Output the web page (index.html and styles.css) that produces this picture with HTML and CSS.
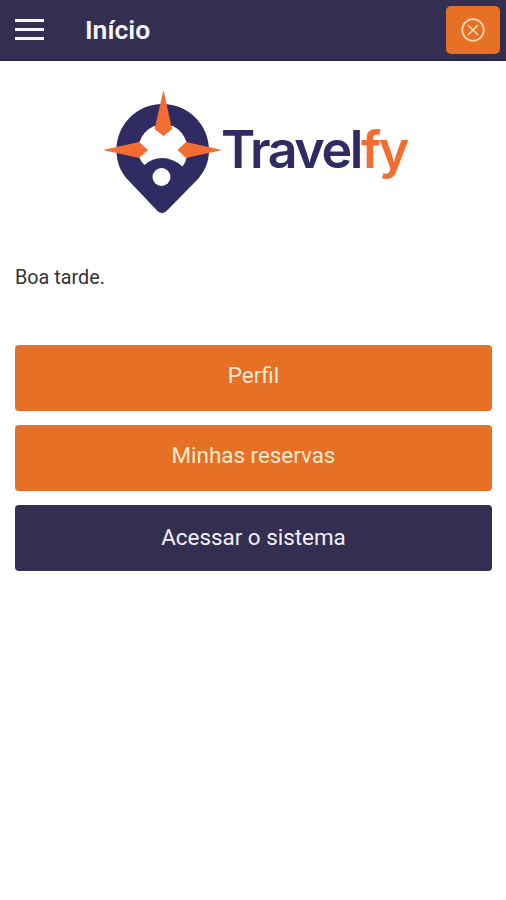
FILE: index.html
```html
<!DOCTYPE html>
<html lang="pt-BR">
<head>
    <meta charset="UTF-8">
    <meta name="viewport" content="width=device-width, initial-scale=1.0">
    <title>Travelfy</title>
    <link rel="stylesheet" href="styles.css">
</head>
<body>
    <header class="header">
        <button class="menu-button" aria-label="Menu">
            <span></span>
            <span></span>
            <span></span>
        </button>
        <h1 class="title">Início</h1>
        <button class="close-button" aria-label="Sair">
            <svg width="24" height="24" viewBox="0 0 24 24" fill="none" stroke="currentColor" stroke-width="1.7">
                <circle cx="12" cy="12" r="10.8"/>
                <path d="M7 7l10 10M17 7l-10 10"/>
            </svg>
        </button>
    </header>

    <main class="content">
        <svg class="logo" width="340" height="130" viewBox="100 87 340 130">
            <!-- Pino -->
            <path class="navy" d="M162.500 104C137 104 116.500 124.500 116.500 150C116.500 163 121 173 129 181L157 210.500Q162 215.500 167 210.500L196 181C204 173 209 163 209 150C209 124.500 188 104 162.500 104Z"/>
            <path class="white" d="M139 157V143Q143 131 154 126H173Q183 131 187 143V156Q186 162 182.500 166.500Q173 158 162 158Q152 158 144.500 165Q141 162 139 157Z"/>
            <circle class="white" cx="161.500" cy="177" r="9"/>
            <!-- Pontas da bússola -->
            <path class="orange" d="M163.500 90L172 129L163.500 136L154.500 129Z"/>
            <path class="orange" d="M103 150L139 142L148 150L139 158Z"/>
            <path class="orange" d="M222 150L186 142L177.500 150L186 158Z"/>
            <text class="wordmark" x="221" y="167.500"><tspan class="navy">Travel</tspan><tspan class="orange">fy</tspan></text>
        </svg>

        <p class="greeting">Boa tarde.</p>

        <nav class="actions">
            <a class="btn btn-orange">Perfil</a>
            <a class="btn btn-orange">Minhas reservas</a>
            <a class="btn btn-navy">Acessar o sistema</a>
        </nav>
    </main>
</body>
</html>
```

FILE: styles.css
```css
:root {
    --navy: #342f51;
    --orange: #e57026;
    --logo-navy: #302b62;
    --logo-orange: #f36c32;
}

* {
    margin: 0;
    padding: 0;
    box-sizing: border-box;
    font-family: Roboto, sans-serif;
}

body {
    background: #fff;
    min-height: 100vh;
}

/* Header */
.header {
    height: 61px;
    padding: 0 6px 0 15px;
    display: flex;
    align-items: center;
    background: var(--navy);
    border-bottom: 2px solid #28234a;
    color: #f7f5ff;
}

.menu-button {
    width: 29px;
    display: flex;
    flex-direction: column;
    gap: 6px;
    background: none;
    border: none;
}

.menu-button span {
    height: 3px;
    background: #f7f5ff;
}

.title {
    margin-left: 41px;
    font-size: 26.5px;
    font-weight: 600;
    line-height: 30px;
}

.close-button {
    width: 54px;
    height: 48px;
    margin-left: auto;
    display: flex;
    align-items: center;
    justify-content: center;
    background: var(--orange);
    border: none;
    border-radius: 5px;
    color: #ffd9ae;
}

/* Conteúdo */
.content {
    padding: 26px 14px 0 15px;
}

.logo {
    display: block;
    margin-left: 85px;
}

.navy {
    fill: var(--logo-navy);
}

.orange {
    fill: var(--logo-orange);
}

.white {
    fill: #fff;
}

.wordmark,
.wordmark tspan {
    font-family: Inter, sans-serif;
    font-size: 52px;
    font-weight: 600;
    letter-spacing: -2.4px;
}

.greeting {
    margin-top: 49px;
    font-size: 19.8px;
    line-height: 24px;
    color: #333;
}

/* Botões */
.actions {
    margin-top: 55px;
    display: flex;
    flex-direction: column;
    gap: 14px;
}

.btn {
    height: 66px;
    padding-top: 15px;
    border-radius: 4px;
    font-size: 22.4px;
    line-height: 30px;
    text-align: center;
}

.btn-orange {
    background: var(--orange);
    color: #ffe9cf;
}

.btn-navy {
    padding-top: 17px;
    background: var(--navy);
    color: #f3f0fb;
}
```
